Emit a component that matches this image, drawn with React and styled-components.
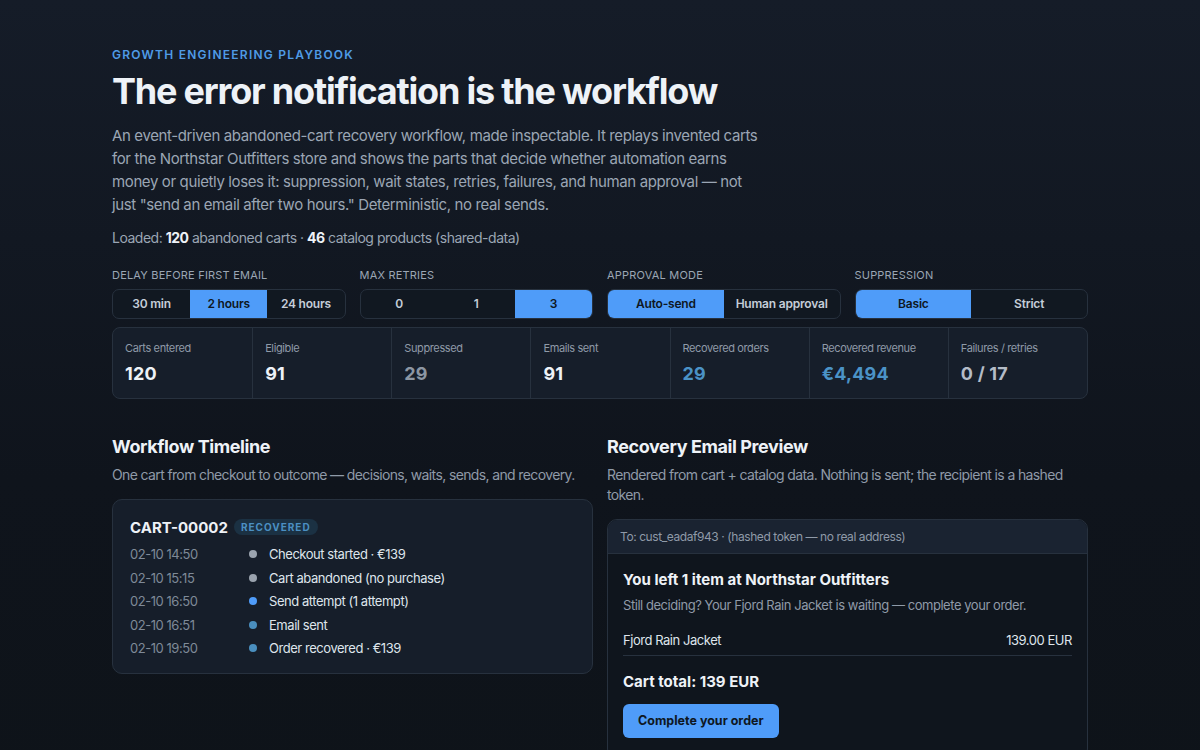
import React from "react";
import styled, { createGlobalStyle, css } from "styled-components";

const GlobalStyle = createGlobalStyle`
  * { box-sizing: border-box; }
  body {
    margin: 0;
    min-height: 100vh;
    background: linear-gradient(180deg, #151c28 0%, #0f141c 60%, #0e1319 100%);
    color: #e6ebf2;
    font-family: Inter, "Noto Sans", sans-serif;
    -webkit-font-smoothing: antialiased;
  }
`;

const tight = css`
  letter-spacing: -0.035em;
`;

const controls = [
  { label: "Delay before first email", options: ["30 min", "2 hours", "24 hours"], active: 1 },
  { label: "Max retries", options: ["0", "1", "3"], active: 2 },
  { label: "Approval mode", options: ["Auto-send", "Human approval"], active: 0 },
  { label: "Suppression", options: ["Basic", "Strict"], active: 0 },
];

const stats = [
  { label: "Carts entered", value: "120" },
  { label: "Eligible", value: "91" },
  { label: "Suppressed", value: "29", tone: "muted" },
  { label: "Emails sent", value: "91" },
  { label: "Recovered orders", value: "29", tone: "accent" },
  { label: "Recovered revenue", value: "€4,494", tone: "accent" },
  { label: "Failures / retries", value: "0 / 17", tone: "soft" },
];

const events = [
  { time: "02-10 14:50", text: "Checkout started · €139", dot: "grey" },
  { time: "02-10 15:15", text: "Cart abandoned (no purchase)", dot: "grey" },
  { time: "02-10 16:50", text: "Send attempt (1 attempt)", dot: "blue" },
  { time: "02-10 16:51", text: "Email sent", dot: "teal" },
  { time: "02-10 19:50", text: "Order recovered · €139", dot: "teal" },
];

export default function App() {
  return (
    <>
      <GlobalStyle />
      <Page>
        <Eyebrow>Growth Engineering Playbook</Eyebrow>
        <Title>The error notification is the workflow</Title>
        <Lead>
          An event-driven abandoned-cart recovery workflow, made inspectable. It replays invented
          carts for the Northstar Outfitters store and shows the parts that decide whether
          automation earns money or quietly loses it: suppression, wait states, retries, failures,
          and human approval — not just "send an email after two hours." Deterministic, no real
          sends.
        </Lead>
        <Loaded>
          Loaded: <strong>120</strong> abandoned carts · <strong>46</strong> catalog products
          (shared-data)
        </Loaded>

        <Controls>
          {controls.map((c) => (
            <Control key={c.label}>
              <ControlLabel>{c.label}</ControlLabel>
              <Segmented>
                {c.options.map((o, i) => (
                  <Segment key={o} $active={i === c.active}>
                    {o}
                  </Segment>
                ))}
              </Segmented>
            </Control>
          ))}
        </Controls>

        <Stats>
          {stats.map((s) => (
            <Stat key={s.label}>
              <StatLabel>{s.label}</StatLabel>
              <StatValue $tone={s.tone}>{s.value}</StatValue>
            </Stat>
          ))}
        </Stats>

        <Columns>
          <section>
            <SectionTitle>Workflow Timeline</SectionTitle>
            <SectionNote>
              One cart from checkout to outcome — decisions, waits, sends, and recovery.
            </SectionNote>
            <TimelineCard>
              <CartHead>
                <CartId>CART-00002</CartId>
                <Badge>Recovered</Badge>
              </CartHead>
              <Events>
                {events.map((e) => (
                  <Event key={e.time}>
                    <EventTime>{e.time}</EventTime>
                    <Dot $kind={e.dot} />
                    <EventText>{e.text}</EventText>
                  </Event>
                ))}
              </Events>
            </TimelineCard>
          </section>

          <section>
            <SectionTitle>Recovery Email Preview</SectionTitle>
            <SectionNote>
              Rendered from cart + catalog data. Nothing is sent; the recipient is a hashed token.
            </SectionNote>
            <EmailCard>
              <EmailTo>To: cust_eadaf943 · (hashed token — no real address)</EmailTo>
              <EmailBody>
                <EmailHeading>You left 1 item at Northstar Outfitters</EmailHeading>
                <EmailIntro>
                  Still deciding? Your Fjord Rain Jacket is waiting — complete your order.
                </EmailIntro>
                <LineItem>
                  <span>Fjord Rain Jacket</span>
                  <span>139.00 EUR</span>
                </LineItem>
                <Total>Cart total: 139 EUR</Total>
                <Cta>Complete your order</Cta>
              </EmailBody>
            </EmailCard>
          </section>
        </Columns>
      </Page>
    </>
  );
}

const Page = styled.main`
  max-width: 976px;
  margin: 0 auto;
  padding: 47px 0 40px;
`;

const Eyebrow = styled.div`
  font-size: 12px;
  font-weight: 600;
  letter-spacing: 1.25px;
  text-transform: uppercase;
  color: #4f9be6;
`;

const Title = styled.h1`
  margin: 10px 0 12px;
  font-size: 36px;
  line-height: 1.1;
  font-weight: 700;
  letter-spacing: -1.2px;
  color: #eef2f7;
`;

const Lead = styled.p`
  margin: 0;
  max-width: 650px;
  font-size: 15px;
  line-height: 23px;
  letter-spacing: -0.025em;
  color: #9ba6b4;
`;

const Loaded = styled.p`
  margin: 13px 0 0;
  font-size: 14px;
  color: #9ba6b4;
  ${tight}

  strong {
    color: #eef2f7;
    font-weight: 700;
  }
`;

const Controls = styled.div`
  display: grid;
  grid-template-columns: repeat(4, 1fr);
  gap: 14px;
  margin-top: 22px;
`;

const Control = styled.div`
  display: flex;
  flex-direction: column;
  gap: 7px;
`;

const ControlLabel = styled.div`
  font-size: 11px;
  letter-spacing: 0.2px;
  text-transform: uppercase;
  color: #9ba6b4;
`;

const Segmented = styled.div`
  display: flex;
  height: 30px;
  border: 1px solid #27313e;
  border-radius: 7px;
  overflow: hidden;
  background: #111821;
`;

const Segment = styled.div`
  flex: 1;
  display: flex;
  align-items: center;
  justify-content: center;
  font-size: 12px;
  font-weight: 600;
  letter-spacing: -0.2px;
  background: ${(p) => (p.$active ? "#4f9cf9" : "transparent")};
  color: ${(p) => (p.$active ? "#0e1722" : "#c5cdd8")};
`;

const Stats = styled.div`
  display: grid;
  grid-template-columns: repeat(7, 1fr);
  margin-top: 8px;
  border: 1px solid #27313e;
  border-radius: 8px;
  overflow: hidden;
  background: #161e2a;
`;

const Stat = styled.div`
  padding: 13px 12px 14px;
  border-left: 1px solid #27313e;

  &:first-child {
    border-left: none;
  }
`;

const StatLabel = styled.div`
  font-size: 11px;
  color: #8f9aa8;
  ${tight}
`;

const toneColors = {
  muted: "#8c96a3",
  accent: "#4b93c7",
  soft: "#b4bcc7",
};

const StatValue = styled.div`
  margin-top: 8px;
  font-size: 18px;
  font-weight: 700;
  letter-spacing: 0.2px;
  color: ${(p) => toneColors[p.$tone] || "#eef2f7"};
`;

const Columns = styled.div`
  display: grid;
  grid-template-columns: 1fr 1fr;
  gap: 14px;
  margin-top: 37px;
  align-items: start;
`;

const SectionTitle = styled.h2`
  margin: 0;
  font-size: 18px;
  font-weight: 700;
  letter-spacing: -0.4px;
  color: #eef2f7;
`;

const SectionNote = styled.p`
  margin: 8px 0 14px;
  font-size: 14px;
  line-height: 20px;
  letter-spacing: -0.045em;
  color: #8f9aa8;
`;

const TimelineCard = styled.div`
  padding: 18px 17px 13px;
  border: 1px solid #27313e;
  border-radius: 10px;
  background: #161e2a;
`;

const CartHead = styled.div`
  display: flex;
  align-items: center;
  gap: 6px;
`;

const CartId = styled.div`
  font-size: 15px;
  font-weight: 700;
  color: #eef2f7;
`;

const Badge = styled.span`
  padding: 2px 7px;
  border-radius: 999px;
  background: #1b3143;
  color: #4b8fc2;
  font-size: 10px;
  font-weight: 700;
  letter-spacing: 1px;
  text-transform: uppercase;
`;

const Events = styled.div`
  display: flex;
  flex-direction: column;
  margin-top: 6px;
`;

const Event = styled.div`
  display: grid;
  grid-template-columns: 117px 22px 1fr;
  align-items: center;
  height: 23.5px;
  font-size: 13px;
  ${tight}
`;

const EventTime = styled.span`
  color: #7f8a98;
`;

const dotColors = {
  grey: "#9aa3ae",
  blue: "#4f9cf9",
  teal: "#4a8fbf",
};

const Dot = styled.span`
  width: 8px;
  height: 8px;
  margin-left: 2px;
  border-radius: 50%;
  background: ${(p) => dotColors[p.$kind]};
`;

const EventText = styled.span`
  color: #dfe5ec;
`;

const EmailCard = styled.div`
  border: 1px solid #27313e;
  border-radius: 10px;
  overflow: hidden;
  background: #0f151d;
`;

const EmailTo = styled.div`
  padding: 9px 12px;
  font-size: 12px;
  color: #8f9aa8;
  background: #1a2331;
  border-bottom: 1px solid #27313e;
  ${tight}
`;

const EmailBody = styled.div`
  padding: 16px 15px 20px;
`;

const EmailHeading = styled.div`
  font-size: 15px;
  font-weight: 700;
  color: #eef2f7;
`;

const EmailIntro = styled.div`
  margin-top: 8px;
  font-size: 13px;
  color: #8f9aa8;
  ${tight}
`;

const LineItem = styled.div`
  display: flex;
  justify-content: space-between;
  margin-top: 19px;
  padding-bottom: 7px;
  border-bottom: 1px solid #27313e;
  font-size: 13px;
  color: #dfe5ec;
  ${tight}
`;

const Total = styled.div`
  margin-top: 16px;
  font-size: 15px;
  font-weight: 700;
  color: #eef2f7;
`;

const Cta = styled.button`
  margin-top: 13px;
  height: 34px;
  padding: 0 15px;
  border: none;
  border-radius: 6px;
  background: #4f9cf9;
  color: #0e1722;
  font-family: inherit;
  font-size: 12.5px;
  font-weight: 700;
`;
